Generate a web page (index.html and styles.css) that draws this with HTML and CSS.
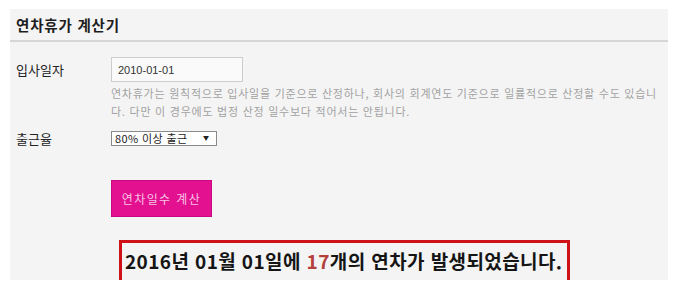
FILE: index.html
```html
<!DOCTYPE html>
<html lang="ko">
<head>
<meta charset="utf-8">
<title>연차휴가 계산기</title>
<link rel="stylesheet" href="styles.css">
</head>
<body>
<section class="panel">
  <header class="panel-head">연차휴가 계산기</header>
  <div class="panel-body">
    <div class="row row-date">
      <label class="label" for="join">입사일자</label>
      <div class="field">
        <input id="join" class="text-input" type="text" value="2010-01-01">
        <p class="help">연차휴가는 원칙적으로 입사일을 기준으로 산정하나, 회사의 회계연도 기준으로 일률적으로 산정할 수도 있습니다. 다만 이 경우에도 법정 산정 일수보다 적어서는 안됩니다.</p>
      </div>
    </div>
    <div class="row row-rate">
      <label class="label" for="rate">출근율</label>
      <div class="field">
        <span class="select-wrap"><select id="rate" class="select"><option>80% 이상 출근</option><option>80% 미만 출근</option></select></span>
      </div>
    </div>
    <div class="row row-btn">
      <span></span>
      <div class="field">
        <button class="calc-btn" type="button">연차일수 계산</button>
      </div>
    </div>
    <div class="row row-result">
      <span></span>
      <div class="field">
        <div class="result">2016년 01월 01일에 <em class="num">17</em>개의 연차가 발생되었습니다.</div>
      </div>
    </div>
  </div>
</section>
</body>
</html>
```

FILE: styles.css
```css
html, body {
  margin: 0;
  padding: 0;
  background: #ffffff;
  overflow: hidden;
}

body {
  font-family: "Noto Sans CJK KR", "Noto Sans", sans-serif;
  color: #222;
}

.panel {
  margin: 9px 0 0 10px;
  width: 658px;
  height: 271px;
  background: #f4f4f4;
  overflow: hidden;
}

.panel-head {
  height: 31px;
  line-height: 31px;
  padding-left: 6px;
  font-size: 14.5px;
  font-weight: bold;
  letter-spacing: 0.8px;
  color: #1e1e1e;
  border-bottom: 2px solid #d6d6d6;
}

.panel-body {
  padding: 15px 0 0 6px;
}

.row {
  display: grid;
  grid-template-columns: 95px 1fr;
}

.field {
  display: flex;
  flex-direction: column;
  align-items: flex-start;
}

.label {
  font-size: 13px;
  line-height: 25px;
  color: #222;
}

.text-input {
  display: block;
  box-sizing: border-box;
  width: 132px;
  height: 25px;
  margin: 0;
  padding: 0 6px;
  border: 1px solid #cdcdcd;
  background: #fafafa;
  font-family: "Liberation Sans", Arial, sans-serif;
  font-size: 11px;
  color: #333;
  outline: none;
}

.help {
  margin: 2px 0 0;
  font-size: 11px;
  line-height: 18px;
  letter-spacing: 0.75px;
  color: #a2a2a2;
  width: 554px;
}

.row-rate {
  margin-top: 11px;
}

.row-rate .label {
  line-height: 15px;
}

.select-wrap {
  position: relative;
  display: block;
}

.select {
  -webkit-appearance: none;
  appearance: none;
  box-sizing: border-box;
  display: block;
  width: 106px;
  height: 15px;
  margin: 0;
  padding: 0 0 0 3px;
  border: 1px solid #8a8a8a;
  border-radius: 0;
  background: #ffffff;
  font-family: "Noto Sans CJK KR", sans-serif;
  font-size: 11px;
  line-height: 13px;
  letter-spacing: 0.4px;
  color: #222;
}

.select-wrap::after {
  content: "▼";
  position: absolute;
  right: 8px;
  top: 3px;
  font-size: 6px;
  line-height: 8px;
  color: #222;
  pointer-events: none;
}

.row-btn {
  margin-top: 34px;
}

.calc-btn {
  display: block;
  width: 101px;
  height: 37px;
  margin: 0;
  padding: 0;
  border: 1px solid #c80a80;
  background: #e3108f;
  color: #f7c4e6;
  font-family: "Noto Sans CJK KR", sans-serif;
  font-size: 12px;
  letter-spacing: 1.4px;
  cursor: pointer;
}

.row-result {
  margin-top: 23px;
}

.result {
  margin-left: 8px;
  box-sizing: border-box;
  width: 451px;
  border: 3px solid #cf1118;
  padding: 4px 0 10px 3px;
  font-size: 19px;
  line-height: 28px;
  letter-spacing: 0.4px;
  font-weight: bold;
  color: #151515;
  white-space: nowrap;
}

.num {
  font-style: normal;
  color: #b5403b;
}
```
